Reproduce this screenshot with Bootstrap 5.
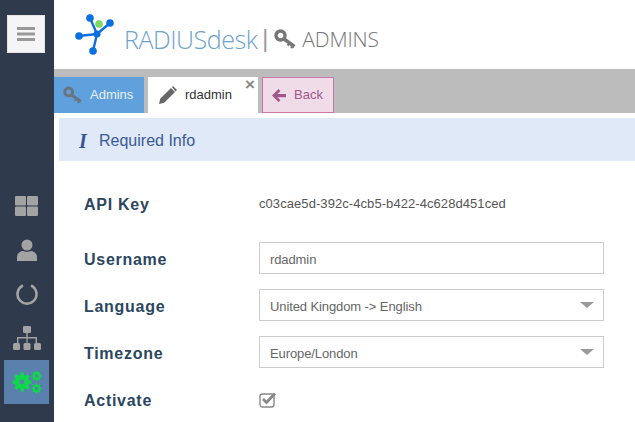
<!DOCTYPE html>
<html lang="en">
<head>
  <meta charset="UTF-8">
  <title>RADIUSdesk Admins</title>
  <link href="https://cdn.jsdelivr.net/npm/bootstrap@5.3.3/dist/css/bootstrap.min.css" rel="stylesheet">
  <style>
    html, body { height: 422px; overflow: hidden; }
    body { font-family: "Liberation Sans", Arial, sans-serif; color: #555; background: #fff; }
    .side-rail { width: 54px; height: 422px; background: #2f3b4c; padding-top: 15px; }
    .menu-btn { width: 38px; height: 38px; margin-left: 7px; background: #f5f5f5; border: 1px solid #e4e4e4; }
    .rail-icons { margin-top: 131px; }
    .rail-item { width: 45px; height: 44px; margin-left: 4px; }
    .rail-item.is-active { background: #5a80ad; }
    .top-head { height: 69px; padding-left: 21px; }
    .logo-mark { margin-top: -1px; }
    .brand-name { font-family: "Open Sans", sans-serif; font-weight: 300; font-size: 25px; letter-spacing: -.45px; color: #6ea2cb; margin-left: 9px; margin-top: 10px; }
    .brand-sep { color: #999; font-size: 23px; font-weight: 300; margin: 10px 6px 0 5px; }
    .head-key { margin-top: 8px; }
    .brand-page { font-family: "Open Sans", sans-serif; font-weight: 300; font-size: 21px; letter-spacing: -.15px; color: #777; margin: 11px 0 0 5px; }
    .tab-strip { height: 44px; background: #bcbcbc; padding-top: 8px; gap: 4px; }
    .tab-item { height: 36px; font-size: 13px; }
    .tab-admins { width: 90px; background: #5fa0dd; color: #e8f0f8; padding-left: 9px; gap: 7px; }
    .tab-user { width: 110px; background: #fff; color: #333; padding-left: 11px; gap: 8px; position: relative; }
    .tab-close { position: absolute; top: 0; right: 3px; font-size: 17px; line-height: 15px; font-weight: 700; color: #888; }
    .tab-back { width: 72px; background: #f0dbe9; border: 1px solid #c878a8; color: #a0588a; padding-left: 9px; gap: 8px; }
    .info-bar { height: 43px; margin: 5px 0 0 5px; background: #dfe9f8; color: #3c5a94; font-size: 16px; padding: 2px 0 0 20px; }
    .info-i { font-family: "Liberation Serif", serif; font-style: italic; font-weight: 700; font-size: 20px; width: 20px; color: #36558f; }
    .form-body { padding: 17px 31px 0 30px; }
    .form-line { height: 48px; margin-bottom: -1px; }
    .form-line.api-line { height: 52px; margin-bottom: 4px; }
    .form-key { width: 175px; flex: none; font-weight: 700; font-size: 16px; letter-spacing: .72px; color: #2c4660; padding-top: 3px; }
    .api-line .form-key { padding-top: 1px; }
    .form-box { height: 32px; border: 1px solid #ccc; padding: 3px 9px 0 10px; font-size: 13px; letter-spacing: -.1px; color: #666; flex: 1; }
    .form-arrow { width: 0; height: 0; border-left: 7px solid transparent; border-right: 7px solid transparent; border-top: 6px solid #999; margin-top: -4px; }
    .api-value { font-size: 13px; letter-spacing: .07px; color: #555; }
  </style>
</head>
<body>
  <div class="d-flex">
    <div class="side-rail flex-shrink-0">
      <div class="menu-btn d-flex align-items-center justify-content-center">
        <svg width="18" height="14" viewBox="0 0 18 14" fill="#999"><rect width="18" height="3"/><rect y="5.5" width="18" height="3"/><rect y="11" width="18" height="3"/></svg>
      </div>
      <div class="rail-icons">
        <div class="rail-item d-flex align-items-center justify-content-center">
          <svg width="23" height="20" viewBox="0 0 23 20" fill="#a3a3a3"><rect width="11" height="9.5" rx="1"/><rect x="12" width="11" height="9.5" rx="1"/><rect y="10.5" width="11" height="9.5" rx="1"/><rect x="12" y="10.5" width="11" height="9.5" rx="1"/></svg>
        </div>
        <div class="rail-item d-flex align-items-center justify-content-center">
          <svg width="20" height="22" viewBox="0 0 20 22" fill="#a3a3a3"><circle cx="10" cy="6" r="5.500"/><path d="M0 22v-4c0-4 4-6 6-6 2 1 6 1 8 0 2 0 6 2 6 6v4z"/></svg>
        </div>
        <div class="rail-item d-flex align-items-center justify-content-center">
          <svg width="22" height="22" viewBox="0 0 22 22" fill="none" stroke="#a3a3a3" stroke-width="2.600"><path d="M7 2.500a9.500 9.500 0 1 0 8 0"/></svg>
        </div>
        <div class="rail-item d-flex align-items-center justify-content-center">
          <svg width="28" height="24" viewBox="0 0 28 24" fill="#a3a3a3"><rect x="10" width="8" height="7" rx="1"/><rect y="17" width="7" height="7" rx="1.500"/><rect x="10.500" y="17" width="7" height="7" rx="1.500"/><rect x="21" y="17" width="7" height="7" rx="1.500"/><path d="M13.300 7h1.400v4H24v6h-1.400v-4.600h-8V17h-1.200v-4.600h-8V17H4v-6h9.300z"/></svg>
        </div>
        <div class="rail-item is-active d-flex align-items-center justify-content-center">
          <svg width="30" height="24" viewBox="0 0 30 24" fill="none" stroke="#0fd84a">
            <circle cx="10" cy="12" r="5.500" stroke-width="3.600"/>
            <path stroke-width="3.400" d="M10 2.500v19M.5 12h19M3.300 5.300l13.400 13.400M16.700 5.300L3.300 18.700"/>
            <circle cx="10" cy="12" r="2.400" fill="#5a80ad" stroke="none"/>
            <circle cx="24.500" cy="6" r="3" stroke-width="2"/>
            <path stroke-width="1.600" d="M24.500 1v10M19.500 6h10M21 2.500l7 7M28 2.500l-7 7"/>
            <circle cx="24.500" cy="6" r="1.700" fill="#5a80ad" stroke="none"/>
            <circle cx="24.500" cy="18.500" r="3" stroke-width="2"/>
            <path stroke-width="1.600" d="M24.500 13.500v10M19.500 18.500h10M21 15l7 7M28 15l-7 7"/>
            <circle cx="24.500" cy="18.500" r="1.700" fill="#5a80ad" stroke="none"/>
          </svg>
        </div>
      </div>
    </div>

    <div class="flex-grow-1 overflow-hidden">
      <div class="top-head d-flex align-items-center">
        <svg width="40" height="42" viewBox="0 0 40 42" class="logo-mark flex-shrink-0">
          <g fill="#0a6fe0">
            <path d="M15 5l7 16M35 10L22 21M4 23l18-2M18 38l4-17" stroke="#0a6fe0" stroke-width="2.400"/>
            <circle cx="15" cy="5" r="3.800"/><circle cx="35" cy="10" r="3.800"/><circle cx="4" cy="23" r="3.800"/><circle cx="22" cy="21" r="3.500"/><circle cx="18" cy="38" r="3.800"/>
          </g>
          <circle cx="24" cy="11" r="3.800" fill="#7fd95e"/>
        </svg>
        <span class="brand-name">RADIUSdesk</span>
        <span class="brand-sep">|</span>
        <svg width="23" height="20" viewBox="0 0 23 20" fill="none" stroke="#777" class="head-key flex-shrink-0"><circle cx="6.500" cy="6.500" r="4.500" stroke-width="3.400"/><path stroke-width="3.400" d="M10 10l10.500 7.500"/><path stroke-width="2.400" d="M15.500 14l-1.800 2.600M19 16.500l-1.800 2.600"/></svg>
        <span class="brand-page">ADMINS</span>
      </div>

      <div class="tab-strip d-flex">
        <div class="tab-item tab-admins d-flex align-items-center">
          <svg width="20" height="18" viewBox="0 0 23 20" fill="none" stroke="#6a7480" class="flex-shrink-0"><circle cx="6.500" cy="6.500" r="4.500" stroke-width="3.400"/><path stroke-width="3.400" d="M10 10l10.500 7.500"/><path stroke-width="2.400" d="M15.500 14l-1.800 2.600M19 16.500l-1.800 2.600"/></svg>
          <span>Admins</span>
        </div>
        <div class="tab-item tab-user d-flex align-items-center">
          <svg width="18" height="18" viewBox="0 0 18 18" fill="#666" class="flex-shrink-0"><path d="M0 18l1.200-5.200L12 2l4 4L5.200 16.800zM13 1l1-1 4 4-1.500 1.500z"/></svg>
          <span>rdadmin</span>
          <span class="tab-close">×</span>
        </div>
        <div class="tab-item tab-back d-flex align-items-center">
          <svg width="14" height="13" viewBox="0 0 14 13" fill="#a0588a" class="flex-shrink-0"><path d="M6.500 0l2 2-3 3H14v3.200H5.500l3 3-2 1.800L0 6.500z"/></svg>
          <span>Back</span>
        </div>
      </div>

      <div class="info-bar d-flex align-items-center">
        <span class="info-i">I</span>
        <span>Required Info</span>
      </div>

      <div class="form-body">
        <div class="form-line api-line d-flex align-items-center">
          <div class="form-key">API Key</div>
          <div class="api-value">c03cae5d-392c-4cb5-b422-4c628d451ced</div>
        </div>
        <div class="form-line d-flex align-items-center">
          <div class="form-key">Username</div>
          <div class="form-box d-flex align-items-center">rdadmin</div>
        </div>
        <div class="form-line d-flex align-items-center">
          <div class="form-key">Language</div>
          <div class="form-box d-flex align-items-center justify-content-between">United Kingdom -&gt; English<span class="form-arrow"></span></div>
        </div>
        <div class="form-line d-flex align-items-center">
          <div class="form-key">Timezone</div>
          <div class="form-box d-flex align-items-center justify-content-between">Europe/London<span class="form-arrow"></span></div>
        </div>
        <div class="form-line d-flex align-items-center">
          <div class="form-key">Activate</div>
          <svg width="18" height="17" viewBox="0 0 18 17" fill="none"><rect x="1" y="3" width="14" height="13" rx="2.500" stroke="#888" stroke-width="1.400"/><path d="M4 8l3.500 3.500L16 2.500" stroke="#888" stroke-width="2.800"/></svg>
        </div>
      </div>
    </div>
  </div>
  <script src="https://cdn.jsdelivr.net/npm/bootstrap@5.3.3/dist/js/bootstrap.bundle.min.js"></script>
</body>
</html>
